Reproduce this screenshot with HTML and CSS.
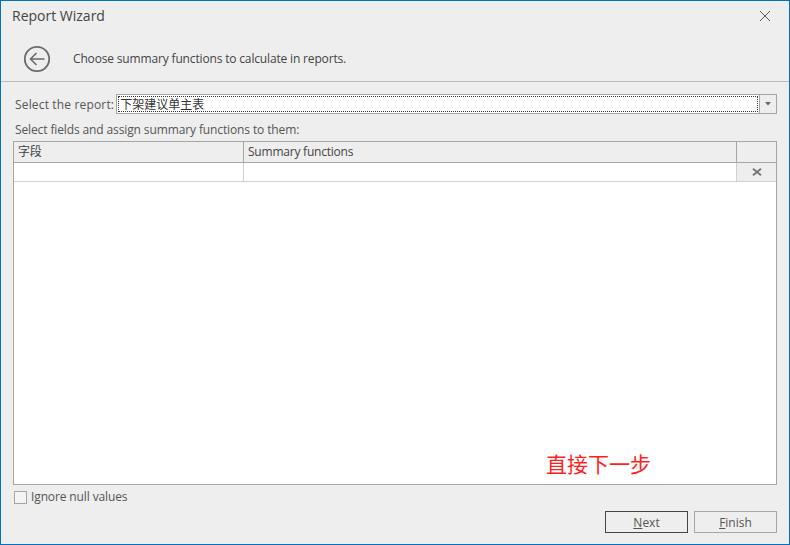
FILE: index.html
```html
<!DOCTYPE html>
<html lang="en">
<head>
<meta charset="utf-8">
<title>Report Wizard</title>
<link rel="stylesheet" href="styles.css">
</head>
<body>
<div class="window">
  <div class="titlebar">
    <span class="title">Report Wizard</span>
    <svg class="close" width="12" height="12" viewBox="0 0 12 12"><path d="M1 1L11 11M11 1L1 11" stroke="#555" stroke-width="1" fill="none"/></svg>
  </div>
  <div class="header">
    <svg class="back" width="28" height="28" viewBox="0 0 28 28"><circle cx="14" cy="14" r="12.2" fill="none" stroke="#6a6a6a" stroke-width="1.8"/><path d="M21.5 14H7.5M13.5 8L7.5 14L13.5 20" fill="none" stroke="#6a6a6a" stroke-width="1.6"/></svg>
    <span class="subtitle">Choose summary functions to calculate in reports.</span>
  </div>
  <div class="content">
    <div class="report-row">
      <span class="label report-label">Select the report:</span>
      <div class="combo">
        <div class="combo-value"><span>下架建议单主表</span></div>
        <div class="combo-btn"><svg width="6" height="4" viewBox="0 0 6 4"><path d="M0 0H6L3 3.5Z" fill="#666"/></svg></div>
      </div>
    </div>
    <div class="label fields-label">Select fields and assign summary functions to them:</div>
    <div class="grid">
      <div class="grid-head">
        <div class="cell col-field">字段</div>
        <div class="cell col-func">Summary functions</div>
        <div class="cell col-del"></div>
      </div>
      <div class="grid-row">
        <div class="rcell col-field"></div>
        <div class="rcell col-func"></div>
        <div class="rcell col-del del"><svg width="10" height="8" viewBox="0 0 10 8"><path d="M1 .8L9 7.2M9 .8L1 7.2" stroke="#777" stroke-width="2" fill="none"/></svg></div>
      </div>
      <div class="note">直接下一步</div>
    </div>
    <label class="check-row"><span class="checkbox"></span><span class="label">Ignore null values</span></label>
    <div class="buttons">
      <div class="btn primary"><span><u>N</u>ext</span></div>
      <div class="btn"><span><u>F</u>inish</span></div>
    </div>
  </div>
</div>
</body>
</html>
```
FILE: styles.css
```css
* { box-sizing: border-box; }
html, body { margin: 0; padding: 0; }
body { width: 790px; height: 545px; overflow: hidden; font-family: "Open Sans", "Noto Sans CJK SC", sans-serif; font-size: 12px; color: #444; }
.window { width: 790px; height: 545px; background: #eee; border: 1px solid #0072c6; display: flex; flex-direction: column; }
.titlebar { height: 29px; display: flex; align-items: center; justify-content: space-between; padding: 0 18px 0 11px; flex: none; }
.title { font-size: 14px; color: #444; }
.header { height: 52px; flex: none; display: flex; align-items: center; padding: 6px 0 0 22px; gap: 22px; border-bottom: 1px solid #bdbdbd; }
.back { flex: none; }
.subtitle { color: #444; font-size: 12px; letter-spacing: -0.16px; }
.content { flex: 1; display: flex; flex-direction: column; padding: 12px 12px 0 12px; min-height: 0; }
.label { color: #555; font-size: 12px; line-height: 16px; letter-spacing: -0.12px; }
.report-label { letter-spacing: 0.16px; position: relative; top: 1px; }
.report-row { display: flex; align-items: center; padding-left: 2px; height: 20px; gap: 2px; flex: none; }
.combo { flex: 1; height: 20px; display: flex; border: 1px solid #a6a6a6; background: #fff; }
.combo-value { flex: 1; margin: 1px; border: 1px dotted #333; display: flex; align-items: center; padding: 2px 0 0 1px; font-size: 12px; color: #333; line-height: 14px; }
.combo-btn { width: 17px; border-left: 1px solid #a6a6a6; background: #eee; display: flex; align-items: center; justify-content: center; }
.fields-label { padding-left: 2px; margin-top: 7px; height: 20px; padding-top: 1px; flex: none; }
.grid { position: relative; height: 344px; border: 1px solid #a6a6a6; background: #fff; flex: none; }
.grid-head { display: flex; height: 21px; background: #eee; border-bottom: 1px solid #a6a6a6; }
.cell { padding-left: 4px; line-height: 20px; border-right: 1px solid #a6a6a6; color: #444; letter-spacing: -0.22px; }
.col-field { width: 230px; }
.col-func { flex: 1; }
.col-del { width: 39px; flex: none; border-right: 0; }
.grid-row { display: flex; height: 19px; border-bottom: 1px solid #d0d0d0; }
.rcell { border-right: 1px solid #d0d0d0; }
.del { background: #eee; border-right: 0; display: flex; align-items: center; justify-content: center; }
.note { position: absolute; left: 532px; top: 309px; color: #ff1f1f; font-size: 21px; line-height: 26px; }
.check-row { display: flex; align-items: center; gap: 4px; padding-left: 1px; margin-top: 5px; height: 14px; flex: none; }
.checkbox { width: 13px; height: 13px; border: 1px solid #a6a6a6; background: #f4f4f4; flex: none; }
.buttons { display: flex; justify-content: flex-end; gap: 6px; margin-top: 7px; flex: none; }
.btn { width: 83px; height: 22px; border: 1px solid #a6a6a6; display: flex; align-items: center; justify-content: center; color: #555; }
.btn.primary { border-color: #444; }
```
